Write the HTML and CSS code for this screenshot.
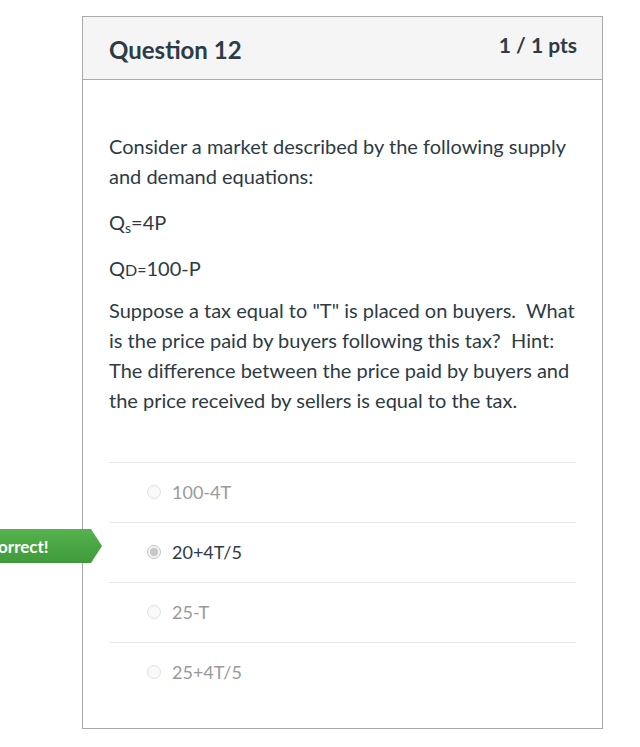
FILE: index.html
```html
<!DOCTYPE html>
<html>
<head>
<meta charset="utf-8">
<link rel="stylesheet" href="styles.css">
</head>
<body>
<div class="page">
  <div class="question">
    <div class="q-header">
      <h2 class="q-title">Question 12</h2>
      <div class="q-points">1 / 1 pts</div>
    </div>
    <div class="q-body">
      <div class="q-text">
        <p>Consider a market described by the following supply and demand equations:</p>
        <p>Q<sub class="sub">s</sub>=4P</p>
        <p class="eq-last">Q<span class="small">D=</span>100-P</p>
        <p>Suppose a tax equal to "T" is placed on buyers.&nbsp; What is the price paid by buyers following this tax?&nbsp; Hint:&nbsp; The difference between the price paid by buyers and the price received by sellers is equal to the tax.</p>
      </div>
      <div class="answers">
        <div class="answer">
          <span class="radio"></span>
          <span class="label">100-4T</span>
        </div>
        <div class="answer answer-selected">
          <div class="badge">Correct!</div>
          <span class="radio radio-checked"></span>
          <span class="label">20+4T/5</span>
        </div>
        <div class="answer">
          <span class="radio"></span>
          <span class="label">25-T</span>
        </div>
        <div class="answer">
          <span class="radio"></span>
          <span class="label">25+4T/5</span>
        </div>
      </div>
    </div>
  </div>
</div>
</body>
</html>
```

FILE: styles.css
```css
* { box-sizing: border-box; }
html, body { margin: 0; padding: 0; background: #fff; }
body {
  font-family: Lato, "Open Sans", "Liberation Sans", sans-serif;
  color: #2d3b45;
  overflow: hidden;
}
.page {
  padding: 16px 0 0 82px;
}
.question {
  width: 521px;
  border: 1px solid #aaaaaa;
  background: #fff;
}
.q-header {
  display: flex;
  justify-content: space-between;
  align-items: flex-start;
  background: #f5f5f5;
  border-bottom: 1px solid #aaaaaa;
  height: 63px;
  padding: 0 25px 0 26px;
}
.q-title {
  margin: 19px 0 0;
  font-size: 24px;
  font-weight: 700;
  line-height: 28px;
}
.q-points {
  margin-top: 15px;
  font-size: 21px;
  font-weight: 700;
  line-height: 26px;
  color: #2d3b45;
}
.q-body {
  padding: 51px 26px 26px;
}
.q-text p {
  margin: 0 0 16px;
  font-size: 20px;
  line-height: 30px;
}
.q-text p.eq-last { margin-bottom: 10px; }
.q-text p:last-child { margin-bottom: 0; }
.sub {
  font-size: 14px;
  vertical-align: -3px;
  line-height: 0;
}
.small {
  font-size: 16px;
}
.answers {
  margin-top: 47px;
}
.answer {
  position: relative;
  display: flex;
  align-items: center;
  height: 60px;
  border-top: 1px solid #e6e6e6;
  padding-left: 38px;
  padding-bottom: 2px;
}
.radio {
  width: 14px;
  height: 14px;
  border-radius: 50%;
  border: 1px solid #e0e0e0;
  background: #f9f9f9;
  margin-right: 11px;
  flex: none;
}
.radio-checked {
  border: 1px solid #c4c4c4;
  background: radial-gradient(circle, #c8c8c8 0 4px, #f4f4f4 4.5px);
}
.label {
  font-size: 18px;
  color: #9a9a9a;
}
.answer-selected .label {
  color: #2d3b45;
}
.badge {
  position: absolute;
  left: -134px;
  top: 6px;
  height: 34px;
  width: 127px;
  padding-left: 12px;
  display: flex;
  align-items: center;
  color: #fff;
  font-size: 17px;
  font-weight: 700;
  background: linear-gradient(#55b24d, #3f9a3b);
  clip-path: polygon(0 0, 116px 0, 127px 50%, 116px 100%, 0 100%);
}
```
